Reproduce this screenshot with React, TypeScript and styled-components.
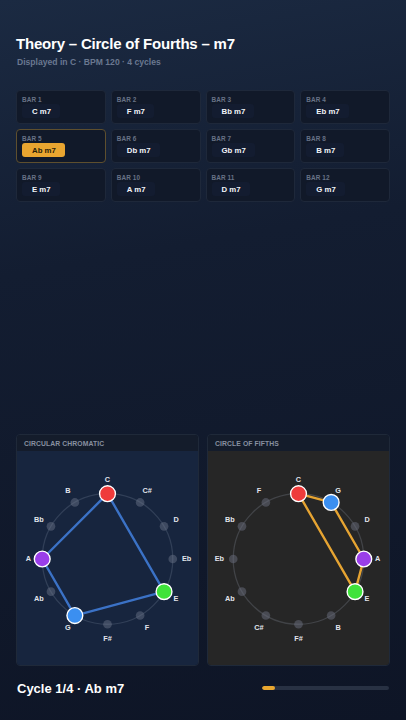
import styled, { createGlobalStyle } from "styled-components";

const GlobalStyle = createGlobalStyle`
    html, body {
        margin: 0;
        padding: 0;
    }
    body {
        background: linear-gradient(170deg, #1b2a42 0%, #131d31 35%, #0e1526 100%);
        font-family: "Liberation Sans", Arial, Helvetica, sans-serif;
        color: #ffffff;
    }
    * {
        box-sizing: border-box;
    }
`

interface Bar {
    id: number
    chord: string
}

const bars: Bar[] = [
    { id: 1, chord: "C m7" },
    { id: 2, chord: "F m7" },
    { id: 3, chord: "Bb m7" },
    { id: 4, chord: "Eb m7" },
    { id: 5, chord: "Ab m7" },
    { id: 6, chord: "Db m7" },
    { id: 7, chord: "Gb m7" },
    { id: 8, chord: "B m7" },
    { id: 9, chord: "E m7" },
    { id: 10, chord: "A m7" },
    { id: 11, chord: "D m7" },
    { id: 12, chord: "G m7" },
]

const CHROMATIC = ["C", "C#", "D", "Eb", "E", "F", "F#", "G", "Ab", "A", "Bb", "B"]
const FIFTHS = ["C", "G", "D", "A", "E", "B", "F#", "C#", "Ab", "Eb", "Bb", "F"]

const noteColors: Record<string, string> = {
    C: "#ef3b3b",
    E: "#3fe23a",
    G: "#3b8ff0",
    A: "#9a3ee9",
}

const Page = styled.div`
    height: 100vh;
    display: flex;
    flex-direction: column;
    padding: 34px 16px 10px 16px;
`
const Title = styled.h1`
    margin: 0;
    font-size: 15px;
    font-weight: 700;
    line-height: 20px;
    color: #ffffff;
    letter-spacing: -0.2px;
`
const Subtitle = styled.p`
    margin: 2px 0 0 1px;
    font-size: 8.6px;
    font-weight: 700;
    line-height: 12px;
    color: #6a7890;
`
const BarGrid = styled.section`
    margin-top: 22px;
    display: grid;
    grid-template-columns: repeat(4, 1fr);
    gap: 5px;
`
const BarCard = styled.div<{ $active?: boolean }>`
    height: 34px;
    padding: 4px 6px 5px 5px;
    border-radius: 4px;
    border: 1px solid ${(p) => (p.$active ? "#5e4f2e" : "#1e283a")};
    background-color: #111929;
    display: flex;
    flex-direction: column;
    align-items: flex-start;
`
const BarLabel = styled.span`
    font-size: 6.4px;
    font-weight: 700;
    line-height: 9px;
    color: #687286;
    letter-spacing: 0.1px;
`
const Chip = styled.span<{ $active?: boolean }>`
    height: 16px;
    padding: 0 9px 0 10px;
    display: inline-flex;
    align-items: center;
    border-radius: 3px;
    font-size: 7.8px;
    font-weight: 700;
    background-color: ${(p) => (p.$active ? "#e9a530" : "#131c30")};
    color: ${(p) => (p.$active ? "#2a1e08" : "#f2f4f8")};
`
const Spacer = styled.div`
    flex: 1;
`
const Panels = styled.section`
    display: grid;
    grid-template-columns: 1fr 1fr;
    gap: 8px;
`
const Panel = styled.div`
    border-radius: 4px;
    border: 1px solid #1f2939;
    overflow: hidden;
    display: flex;
    flex-direction: column;
`
const PanelHeader = styled.div`
    height: 16px;
    padding-left: 7px;
    display: flex;
    align-items: center;
    background-color: #141c2b;
    font-size: 6.8px;
    font-weight: 700;
    color: #8890a0;
    letter-spacing: 0.1px;
`
const PanelBody = styled.div<{ $tone: "blue" | "gray" }>`
    height: 214px;
    background-color: ${(p) => (p.$tone === "blue" ? "#17253e" : "#262626")};
    display: flex;
    align-items: center;
    justify-content: center;
`
const Footer = styled.footer`
    height: 44px;
    display: flex;
    align-items: center;
    justify-content: space-between;
    padding: 0 1px;
`
const CycleText = styled.span`
    font-size: 13px;
    font-weight: 700;
    color: #ffffff;
`
const Progress = styled.div`
    width: 127px;
    height: 4px;
    border-radius: 2px;
    background-color: #283143;
    overflow: hidden;
`
const ProgressFill = styled.div`
    height: 100%;
    border-radius: 2px;
    background-color: #e9a730;
`

interface CircleProps {
    order: string[]
    notes: string[]
    lineColor: string
    ringColor: string
    dotColor: string
}

const CircleDiagram = function ({ order, notes, lineColor, ringColor, dotColor }: CircleProps) {
    const cx = 91.5
    const cy = 108
    const r = 66
    const lr = 80
    const pos = (i: number, rad: number) => {
        const a = (i * Math.PI) / 6
        return { x: cx + rad * Math.sin(a), y: cy - rad * Math.cos(a) }
    }
    const active = order
        .map((n, i) => ({ n, i }))
        .filter((o) => notes.includes(o.n))
    const points = active.map((o) => pos(o.i, r))
    const path = points.map((p) => `${p.x.toFixed(1)},${p.y.toFixed(1)}`).join(" ")

    return (
        <svg width="183" height="214" viewBox="0 0 183 214">
            <circle cx={cx} cy={cy} r={r} fill="none" stroke={ringColor} strokeWidth="1.3" />
            <polygon points={path} fill="none" stroke={lineColor} strokeWidth="2.4" strokeLinejoin="round" />
            {order.map((n, i) => {
                const p = pos(i, r)
                const l = pos(i, lr)
                const on = notes.includes(n)
                return (
                    <g key={n}>
                        {on ? (
                            <circle cx={p.x} cy={p.y} r="8" fill={noteColors[n]} stroke="#ffffff" strokeWidth="1.4" />
                        ) : (
                            <circle cx={p.x} cy={p.y} r="4.4" fill={dotColor} />
                        )}
                        <text
                            x={l.x}
                            y={l.y}
                            textAnchor="middle"
                            dominantBaseline="central"
                            fontSize="7.4"
                            fontWeight="700"
                            fill="#e2e5ec"
                            fontFamily="Liberation Sans, Arial, sans-serif"
                        >
                            {n}
                        </text>
                    </g>
                )
            })}
        </svg>
    )
}

const chordNotes = ["C", "E", "G", "A"]

export default function App() {
    return (
        <>
            <GlobalStyle />
            <Page>
                <Title>Theory – Circle of Fourths – m7</Title>
                <Subtitle>Displayed in C · BPM 120 · 4 cycles</Subtitle>
                <BarGrid>
                    {bars.map((b) => (
                        <BarCard key={b.id} $active={b.id === 5}>
                            <BarLabel>BAR {b.id}</BarLabel>
                            <Chip $active={b.id === 5}>{b.chord}</Chip>
                        </BarCard>
                    ))}
                </BarGrid>
                <Spacer />
                <Panels>
                    <Panel>
                        <PanelHeader>CIRCULAR CHROMATIC</PanelHeader>
                        <PanelBody $tone="blue">
                            <CircleDiagram
                                order={CHROMATIC}
                                notes={chordNotes}
                                lineColor="#3b72c6"
                                ringColor="rgba(120,132,155,0.28)"
                                dotColor="rgba(110,120,140,0.45)"
                            />
                        </PanelBody>
                    </Panel>
                    <Panel>
                        <PanelHeader>CIRCLE OF FIFTHS</PanelHeader>
                        <PanelBody $tone="gray">
                            <CircleDiagram
                                order={FIFTHS}
                                notes={chordNotes}
                                lineColor="#e6a432"
                                ringColor="rgba(130,135,150,0.3)"
                                dotColor="rgba(105,110,125,0.5)"
                            />
                        </PanelBody>
                    </Panel>
                </Panels>
                <Footer>
                    <CycleText>Cycle 1/4 · Ab m7</CycleText>
                    <Progress>
                        <ProgressFill style={{ width: "10%" }} />
                    </Progress>
                </Footer>
            </Page>
        </>
    )
}
